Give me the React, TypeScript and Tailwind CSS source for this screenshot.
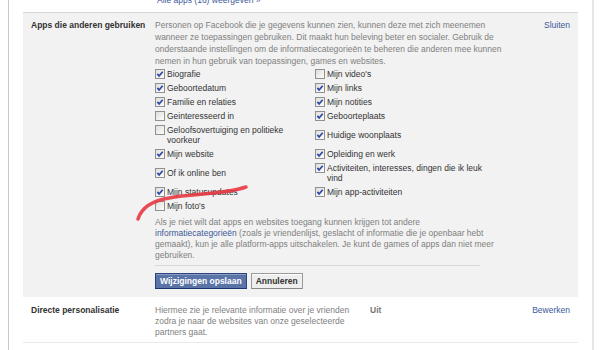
const ROWS: [string[] | null, boolean, string[] | null, boolean][] = [
  [['Biografie'], true, ["Mijn video's"], false],
  [['Geboortedatum'], true, ['Mijn links'], true],
  [['Familie en relaties'], true, ['Mijn notities'], true],
  [['Geinteresseerd in'], false, ['Geboorteplaats'], true],
  [['Geloofsovertuiging en politieke', 'voorkeur'], false, ['Huidige woonplaats'], true],
  [['Mijn website'], true, ['Opleiding en werk'], true],
  [['Of ik online ben'], true, ['Activiteiten, interesses, dingen die ik leuk', 'vind'], true],
  [['Mijn statusupdates'], true, ['Mijn app-activiteiten'], true],
  [["Mijn foto's"], false, null, false],
];

function Check({ on }: { on: boolean }) {
  return (
    <svg width="10" height="10" viewBox="0 0 10 10" className="shrink-0">
      <defs>
        <linearGradient id="cbg" x1="0" y1="0" x2="1" y2="1">
          <stop offset="0" stopColor="#dcdcd8" />
          <stop offset="1" stopColor="#ffffff" />
        </linearGradient>
      </defs>
      <rect x="0.5" y="0.5" width="9" height="9" fill="url(#cbg)" stroke="#8f9092" />
      {on && <path d="M2.4 4.9 L4.1 7 L7.7 2.7" fill="none" stroke="#2a47a3" strokeWidth="1.7" />}
    </svg>
  );
}

function Item({ label, on }: { label: string[] | null; on: boolean }) {
  if (!label) return <div />;
  return (
    <div className="flex items-start gap-[2px] py-[2px]">
      <Check on={on} />
      <span className="leading-[10px] text-[#333] whitespace-nowrap">
        {label.map((l, i) => (
          <span key={i} className="block">{l}</span>
        ))}
      </span>
    </div>
  );
}

export default function App() {
  return (
    <div className="relative w-[600px] h-[350px] bg-white overflow-hidden font-['Liberation_Sans',Arial,sans-serif] text-[8.5px]">
      <div className="ml-[8px] w-[586px] h-full border-l border-r-2 border-l-[#c9c9c9] border-r-[#e6e6e6] px-[14px]">
        {/* link row, cut off at the top edge */}
        <div className="flex h-[12px] pl-[134px]">
          <div className="-mt-[5px] leading-[11px] text-[#3b5998]">Alle apps (16) weergeven »</div>
        </div>

        {/* Apps die anderen gebruiken */}
        <div className="flex bg-[#f2f2f2] border-t border-[#d6d6d6] pl-[8px] pr-[8px] pt-[6px] pb-[8px]">
          <div className="w-[124px] shrink-0 font-bold text-[#333] leading-[12px]">Apps die anderen gebruiken</div>
          <div className="flex-1">
            <div className="flex justify-between">
              <p className="text-[#808080] leading-[12px] whitespace-nowrap">
                Personen op Facebook die je gegevens kunnen zien, kunnen deze met zich meenemen<br />
                wanneer ze toepassingen gebruiken. Dit maakt hun beleving beter en socialer. Gebruik de<br />
                onderstaande instellingen om de informatiecategorieën te beheren die anderen mee kunnen<br />
                nemen in hun gebruik van toepassingen, games en websites.
              </p>
              <a className="text-[#3b5998] leading-[12px]">Sluiten</a>
            </div>

            <div className="grid grid-cols-[160px_160px] items-center">
              {ROWS.map(([l, lo, r, ro], i) => (
                <div key={i} className="contents">
                  <Item label={l} on={lo} />
                  <Item label={r} on={ro} />
                </div>
              ))}
            </div>

            <div className="w-[325px] mt-[4px] pb-[4px] border-b border-[#d8d8d8]">
              <p className="text-[#808080] leading-[11px] whitespace-nowrap">
                Als je niet wilt dat apps en websites toegang kunnen krijgen tot andere<br />
                <a className="text-[#3b5998]">informatiecategorieën</a> (zoals je vriendenlijst, geslacht of informatie die je openbaar hebt<br />
                gemaakt), kun je alle platform-apps uitschakelen. Je kunt de games of apps dan niet meer<br />
                gebruiken.
              </p>
            </div>

            <div className="flex gap-[4px] mt-[7px]">
              <button className="h-[16px] px-[4px] bg-[#5b74a8] border border-[#29447e] border-b-[#1a356e] text-white font-bold leading-[14px] shadow-[inset_0_1px_0_#8a9cc2]">
                Wijzigingen opslaan
              </button>
              <button className="h-[16px] px-[4px] bg-[#eeeeee] border border-[#999] border-b-[#888] text-[#333] font-bold leading-[14px] shadow-[inset_0_1px_0_#ffffff]">
                Annuleren
              </button>
            </div>
          </div>
        </div>

        {/* Directe personalisatie */}
        <div className="flex pl-[8px] pr-[8px] pt-[8px] pb-[4px] border-b border-[#e9e9e9]">
          <div className="w-[124px] shrink-0 font-bold text-[#333] leading-[11px]">Directe personalisatie</div>
          <p className="w-[215px] shrink-0 text-[#808080] leading-[11px] whitespace-nowrap">
            Hiermee zie je relevante informatie over je vrienden<br />
            zodra je naar de websites van onze geselecteerde<br />
            partners gaat.
          </p>
          <div className="flex-1 font-bold text-[#777] leading-[11px]">Uit</div>
          <a className="text-[#3b5998] leading-[11px]">Bewerken</a>
        </div>
      </div>

      {/* red hand-drawn annotation */}
      <svg className="absolute inset-0 pointer-events-none" width="600" height="350" viewBox="0 0 600 350">
        <path
          d="M138 219 C 141 209, 151 201, 169 198 C 193 193, 222 195, 246 187"
          fill="none"
          stroke="#e8323e"
          strokeOpacity="0.88"
          strokeWidth="3.5"
          strokeLinecap="round"
        />
      </svg>
    </div>
  );
}
